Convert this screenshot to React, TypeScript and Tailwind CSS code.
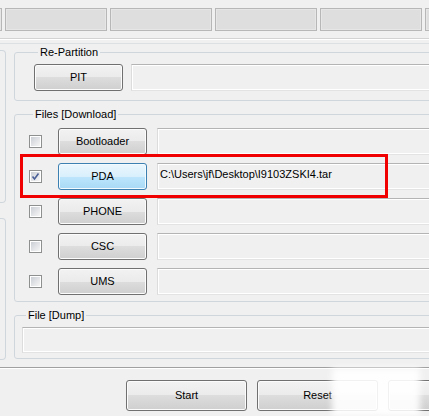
import React from 'react';

const font = { fontFamily: '"Liberation Sans", Arial, sans-serif' };

const WinButton: React.FC<{ label: string; active?: boolean; className?: string }> = ({ label, active, className }) => (
  <div
    className={
      'flex shrink-0 items-center justify-center rounded-[3px] border text-[11px] text-black ' +
      (active
        ? 'border-[#3c7fb1] bg-[linear-gradient(to_bottom,#eaf6fd_0%,#d9f0fc_50%,#bee6fd_50%,#a7d9f5_100%)] shadow-[inset_0_0_0_1px_#f4fbff] '
        : 'border-[#707070] bg-[linear-gradient(to_bottom,#f2f2f2_0%,#ebebeb_50%,#dddddd_50%,#cfcfcf_100%)] shadow-[inset_0_0_0_1px_#fcfcfc] ') +
      (className ?? '')
    }
  >
    {label}
  </div>
);

const TextField: React.FC<{ value?: string; className?: string }> = ({ value, className }) => (
  <div
    className={
      'flex-1 border border-x-[#dcdcdc] border-t-[#b4b4b4] border-b-[#e3e3e3] bg-[#f0f0f0] pl-[2px] pt-[4px] text-[11px] leading-[13px] text-black shadow-[inset_0_0_0_1px_#ffffff] ' +
      (className ?? '')
    }
  >
    {value}
  </div>
);

const CheckBox: React.FC<{ checked?: boolean }> = ({ checked }) => (
  <div className="flex h-[13px] w-[13px] shrink-0 items-center justify-center border border-[#8e8f8f] bg-white">
    <div className="flex h-[9px] w-[9px] items-center justify-center bg-[linear-gradient(135deg,#cbcfd5,#f6f6f6)]">
      {checked && (
        <svg width="9" height="9" viewBox="0 0 9 9">
          <path d="M1.5 4.5 L3.5 7 L7.5 1.5" fill="none" stroke="#4a5f97" strokeWidth="1.6" />
        </svg>
      )}
    </div>
  </div>
);

const rows = [
  { name: 'Bootloader' },
  { name: 'PDA', checked: true, path: 'C:\\Users\\jf\\Desktop\\I9103ZSKI4.tar' },
  { name: 'PHONE' },
  { name: 'CSC' },
  { name: 'UMS' },
];

export default function App() {
  return (
    <div className="relative h-[416px] w-[429px] overflow-hidden bg-[#f0f0f0] text-black" style={font}>
      {/* status boxes */}
      <div className="ml-[-100px] mt-[8px] flex gap-[3px]">
        {[0, 1, 2, 3, 4, 5].map((i) => (
          <div key={i} className="h-[23px] w-[102px] shrink-0 border border-[#b7b7b7] bg-[#dedede] shadow-[inset_0_0_0_1px_#e6e6e6]" />
        ))}
      </div>

      {/* tab edge */}
      <div className="mt-[7px] border-t border-[#d3d3d3]" />
      <div className="h-[4px] border-t border-white" />
      <div className="h-[1px] bg-[#dde0e3]" />

      {/* body */}
      <div className="flex w-[480px] gap-[8px]">
        <div className="flex w-[6px] shrink-0 flex-col">
          <div className="mt-[6px] h-[153px] rounded-r-[4px] border-y border-r border-[#d0d7dc]" />
          <div className="mt-[15px] h-[142px] rounded-r-[4px] border-y border-r border-[#d0d7dc]" />
        </div>

        <div className="flex flex-1 flex-col">
          <fieldset className="mt-[2px] rounded-[3px] border border-[#d0d7dc] pb-[9px] pl-[19px] pt-[5px]">
            <legend className="ml-[4px] px-[2px] text-[11px] leading-[13px]">Re-Partition</legend>
            <div className="flex gap-[8px]">
              <WinButton label="PIT" className="h-[27px] w-[89px]" />
              <TextField className="h-[27px]" />
            </div>
          </fieldset>

          <fieldset className="mt-[7px] rounded-[3px] border border-[#d0d7dc] pb-[6px] pl-[14px] pt-[7px]">
            <legend className="ml-[4px] px-[2px] text-[11px] leading-[13px]">Files [Download]</legend>
            <div className="flex flex-col gap-[8px]">
              {rows.map((r) => (
                <div key={r.name} className="relative flex h-[27px] items-center">
                  <CheckBox checked={r.checked} />
                  <WinButton label={r.name} active={r.checked} className="ml-[16px] h-[27px] w-[89px]" />
                  <TextField value={r.path} className="ml-[10px] h-[27px]" />
                  {r.checked && (
                    <div className="absolute left-[-9px] top-[-9px] h-[44px] w-[368px] border-[3px] border-[#f00000]" />
                  )}
                </div>
              ))}
            </div>
          </fieldset>

          <fieldset className="mt-[7px] rounded-[3px] border border-[#d0d7dc] pb-[5px] pl-[7px] pt-[5px]">
            <legend className="ml-[4px] px-[2px] text-[11px] leading-[13px]">File [Dump]</legend>
            <TextField className="h-[26px]" />
          </fieldset>
        </div>
      </div>

      {/* separator + actions */}
      <div className="mt-[7px] border-t border-[#a0a0a0]" />
      <div className="h-[12px] border-t border-white" />
      <div className="ml-[126px] flex gap-[10px]">
        <WinButton label="Start" className="h-[31px] w-[121px]" />
        <WinButton label="Reset" className="h-[31px] w-[121px]" />
        <WinButton label="" className="h-[31px] w-[121px]" />
      </div>

      {/* watermark smudge */}
      <div className="absolute left-[332px] top-[368px] h-[48px] w-[88px] bg-white/90 blur-[3px]" />
    </div>
  );
}
